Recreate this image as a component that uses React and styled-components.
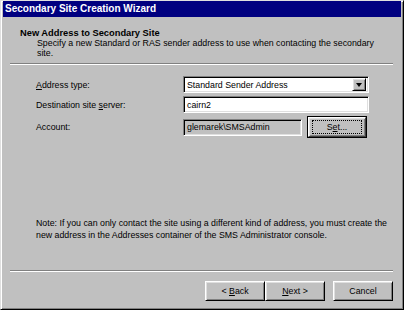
import React from 'react'
import styled, { createGlobalStyle } from 'styled-components'

const GlobalStyle = createGlobalStyle`
  html, body {
    margin: 0;
    padding: 0;
    background: #c0c0c0;
  }
  body {
    font-family: "Liberation Sans", Arial, sans-serif;
    font-size: 8.8px;
    color: #000;
  }
`

const raised = `
  border: 1px solid;
  border-color: #fff #000 #000 #fff;
  box-shadow: inset 1px 1px #dfdfdf, inset -1px -1px #808080;
`

const sunken = `
  border: 1px solid;
  border-color: #808080 #fff #fff #808080;
  box-shadow: inset 1px 1px #000, inset -1px -1px #dfdfdf;
`

const App = () => {
    return (
        <>
            <GlobalStyle />
            <Window>
                <TitleBar>Secondary Site Creation Wizard</TitleBar>
                <Header>
                    <HeaderTitle>New Address to Secondary Site</HeaderTitle>
                    <HeaderText>
                        Specify a new Standard or RAS sender address to use when contacting the secondary site.
                    </HeaderText>
                </Header>
                <Separator />
                <Body>
                    <Form>
                        <Label><u>A</u>ddress type:</Label>
                        <Combo>
                            <FieldText>Standard Sender Address</FieldText>
                            <DropButton>
                                <Arrow />
                            </DropButton>
                        </Combo>

                        <Label>Destination site <u>s</u>erver:</Label>
                        <Field>
                            <FieldText>cairn2</FieldText>
                        </Field>

                        <Label>Account:</Label>
                        <AccountRow>
                            <Field $readonly $width={119}>
                                <FieldText>glemarek\SMSAdmin</FieldText>
                            </Field>
                            <Button $default $width={58}>
                                <Focus>S<u>e</u>t...</Focus>
                            </Button>
                        </AccountRow>
                    </Form>
                    <Note>
                        Note: If you can only contact the site using a different kind of address, you must create
                        the new address in the Addresses container of the SMS Administrator console.
                    </Note>
                </Body>
                <Separator />
                <Footer>
                    <Button>&lt;&nbsp;<u>B</u>ack</Button>
                    <Button>
                        <u>N</u>ext&nbsp;&gt;
                    </Button>
                    <Button $gap>Cancel</Button>
                </Footer>
            </Window>
        </>
    )
}

const Window = styled.div({
    width: '404px',
    height: '310px',
    boxSizing: 'border-box',
    display: 'flex',
    flexDirection: 'column',
    background: '#c0c0c0',
    border: '1px solid',
    borderColor: '#dfdfdf #000 #000 #dfdfdf',
    boxShadow: 'inset 1px 1px #fff, inset -1px -1px #808080',
    padding: '0 2px 2px 2px'
})

const TitleBar = styled.div({
    height: '16px',
    flexShrink: 0,
    background: '#000080',
    color: '#fff',
    fontWeight: 'bold',
    fontSize: '10px',
    lineHeight: '16px',
    paddingLeft: '2px'
})

const Header = styled.div({
    padding: '11px 20px 5px 17px'
})

const HeaderTitle = styled.div({
    fontWeight: 'bold',
    fontSize: '9.3px',
    lineHeight: '10px'
})

const HeaderText = styled.div({
    paddingLeft: '17px',
    lineHeight: '10px'
})

const Separator = styled.div({
    height: '1px',
    flexShrink: 0,
    margin: '0 8px 0 7px',
    background: '#808080',
    borderBottom: '1px solid #fff'
})

const Body = styled.div({
    flex: 1,
    display: 'flex',
    flexDirection: 'column',
    justifyContent: 'space-between',
    padding: '11px 8px 29px 33px'
})

const Form = styled.div({
    display: 'grid',
    gridTemplateColumns: '147px 186px',
    rowGap: '3px',
    alignItems: 'center'
})

const Label = styled.div({
    lineHeight: '10px'
})

const Field = styled.div`
  ${sunken}
  box-sizing: border-box;
  height: 17px;
  width: ${p => (p.$width ? `${p.$width}px` : '100%')};
  background: ${p => (p.$readonly ? '#c0c0c0' : '#fff')};
  display: flex;
  align-items: center;
  padding: 0 3px;
`

const Combo = styled(Field)`
  padding: 0 2px 0 3px;
  justify-content: space-between;
`

const FieldText = styled.span({
    lineHeight: '10px',
    whiteSpace: 'nowrap'
})

const DropButton = styled.div`
  ${raised}
  box-sizing: border-box;
  width: 14px;
  height: 13px;
  background: #c0c0c0;
  display: flex;
  align-items: center;
  justify-content: center;
`

const Arrow = styled.div({
    width: 0,
    height: 0,
    borderLeft: '3.5px solid transparent',
    borderRight: '3.5px solid transparent',
    borderTop: '4px solid #000'
})

const AccountRow = styled.div({
    display: 'flex',
    alignItems: 'center',
    justifyContent: 'space-between',
    marginTop: '1px',
    paddingRight: '3px'
})

const Button = styled.div`
  ${raised}
  box-sizing: border-box;
  width: ${p => (p.$width ? `${p.$width}px` : '60px')};
  height: 20px;
  margin-left: ${p => (p.$gap ? '8px' : '0')};
  background: #c0c0c0;
  display: flex;
  align-items: center;
  justify-content: center;
  line-height: 10px;
  ${p => p.$default && `
    outline: 1px solid #000;
    outline-offset: 0;
    border-color: #fff #404040 #404040 #fff;
  `}
`

const Focus = styled.span({
    display: 'flex',
    alignItems: 'center',
    justifyContent: 'center',
    width: '48px',
    height: '12px',
    outline: '1px dotted #000'
})

const Note = styled.div({
    lineHeight: '12px',
    paddingRight: '4px'
})

const Footer = styled.div({
    display: 'flex',
    justifyContent: 'flex-end',
    padding: '9px 8px 6px 0'
})

export default App
